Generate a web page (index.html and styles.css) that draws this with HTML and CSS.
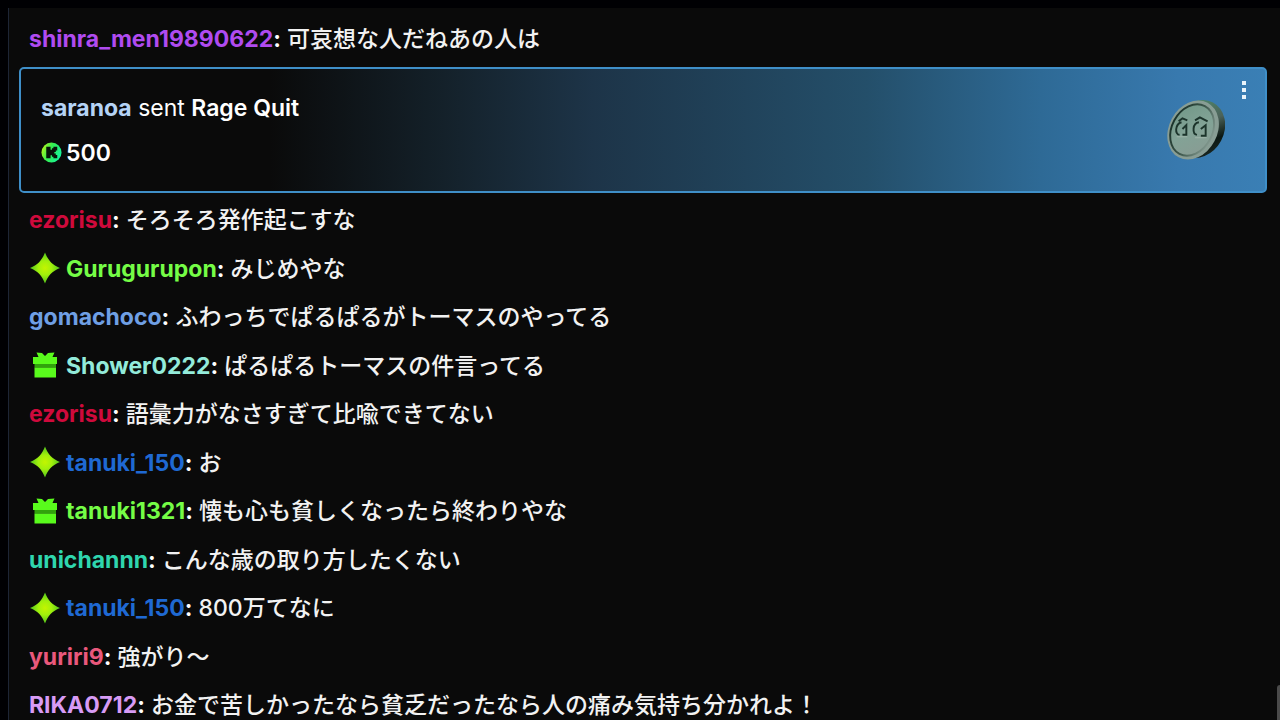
FILE: index.html
```
<!DOCTYPE html>
<html lang="ja">
<head>
    <meta charset="UTF-8">
    <meta name="viewport" content="width=device-width, initial-scale=1.0">
    <title>Chat</title>
    <link rel="stylesheet" href="styles.css">
</head>
<body>
    <!-- shared badge shapes -->
    <svg class="defs" width="0" height="0" aria-hidden="true">
        <defs>
            <radialGradient id="sparkFill">
                <stop offset="0" stop-color="#c3f500"/>
                <stop offset="0.45" stop-color="#a2f00c"/>
                <stop offset="1" stop-color="#4fc41c"/>
            </radialGradient>
            <symbol id="spark" viewBox="0 0 30 32">
                <path fill="url(#sparkFill)" d="M15 0.5C18 8 22 13 30 16C22 19 18 24 15 31.500C12 24 8 19 0 16C8 13 12 8 15 0.500Z"/>
            </symbol>
            <symbol id="gift" viewBox="0 0 30 32">
                <path fill="#59fb1c" d="M6.500 3.500L12 4L15 7L18 4L24.500 3.500L22.500 8H27V15H3V8H8.500Z"/>
                <path fill="#31a30c" d="M4.500 15H26V18.500H4.500Z"/>
                <path fill="#59fb1c" d="M4.500 18.500H26V28.500H4.500Z"/>
            </symbol>
        </defs>
    </svg>

    <main class="chat">
        <p class="message"><a href="#" class="name violet">shinra_men19890622</a><span class="colon">:</span> 可哀想な人だねあの人は</p>

        <section class="gift-card">
            <div class="gift-info">
                <p class="gift-title"><a href="#" class="name ice">saranoa</a> sent <strong>Rage Quit</strong></p>
                <p class="gift-amount">
                    <svg class="kick-icon" viewBox="0 0 22 22" aria-hidden="true">
                        <defs>
                            <linearGradient id="kickFill" x1="0" x2="1" y1="0.3" y2="0.7">
                                <stop offset="0" stop-color="#b4f51c"/>
                                <stop offset="0.4" stop-color="#35ee50"/>
                                <stop offset="1" stop-color="#12f5a4"/>
                            </linearGradient>
                        </defs>
                        <circle cx="11" cy="11" r="10.500" fill="url(#kickFill)"/>
                        <path fill="#07130b" d="M5.500 5H10V8H11.500V6.500H13V5H17V9H15.500V10.500H14V12H15.500V13.500H17V17H13V15.500H11.500V14H10V17H5.500Z"/>
                    </svg>
                    <span>500</span>
                </p>
            </div>
            <svg class="coin" viewBox="0 0 60 64" role="img" aria-label="Rage Quit">
                <defs>
                    <linearGradient id="coinFace" x1="0" y1="0" x2="1" y2="1">
                        <stop offset="0" stop-color="#6f9685"/>
                        <stop offset="0.5" stop-color="#82a396"/>
                        <stop offset="1" stop-color="#8a9a93"/>
                    </linearGradient>
                    <linearGradient id="coinEdge" x1="0" y1="0" x2="1" y2="1">
                        <stop offset="0" stop-color="#4f9673"/>
                        <stop offset="0.45" stop-color="#4b6259"/>
                        <stop offset="0.7" stop-color="#0b1712"/>
                        <stop offset="1" stop-color="#26332e"/>
                    </linearGradient>
                    <linearGradient id="coinRing" x1="0" y1="0" x2="1" y2="0">
                        <stop offset="0" stop-color="#1c342b"/>
                        <stop offset="0.5" stop-color="#3c564b"/>
                        <stop offset="1" stop-color="#7d948a"/>
                    </linearGradient>
                </defs>
                <ellipse cx="33" cy="31" rx="26" ry="31" transform="rotate(28 33 31)" fill="url(#coinEdge)"/>
                <ellipse cx="27" cy="32" rx="25" ry="32" transform="rotate(28 27 32)" fill="#889d94"/>
                <ellipse cx="26" cy="32" rx="21" ry="28" transform="rotate(28 26 32)" fill="url(#coinFace)" stroke="url(#coinRing)" stroke-width="2"/>
                <g fill="none" stroke="#1c342b" stroke-width="2">
                    <path d="M12 23L16 20L21 22M15 24C8 26 8 37 13 37M16 31L20 27V37H16"/>
                    <path d="M29 22L34 19L42 23M33 24C26 25 26 36 31 37M35 31L40 27V38H35"/>
                </g>
                <path d="M10 39H21M29 40H41" fill="none" stroke="#a0b5aa" stroke-width="1"/>
            </svg>
            <button type="button" class="menu-button" aria-label="Menu">
                <svg viewBox="0 0 4 20" aria-hidden="true">
                    <path fill="#e9f4fb" d="M0 0H4V4H0ZM0 7H4V11H0ZM0 14H4V18H0Z"/>
                </svg>
            </button>
        </section>

        <div class="messages">
            <p class="message"><a href="#" class="name red">ezorisu</a><span class="colon">:</span> そろそろ発作起こすな</p>
            <p class="message"><svg class="badge" aria-hidden="true"><use href="#spark"/></svg><a href="#" class="name green">Gurugurupon</a><span class="colon">:</span> みじめやな</p>
            <p class="message"><a href="#" class="name sky">gomachoco</a><span class="colon">:</span> ふわっちでぱるぱるがトーマスのやってる</p>
            <p class="message"><svg class="badge" aria-hidden="true"><use href="#gift"/></svg><a href="#" class="name mint">Shower0222</a><span class="colon">:</span> ぱるぱるトーマスの件言ってる</p>
            <p class="message"><a href="#" class="name red">ezorisu</a><span class="colon">:</span> 語彙力がなさすぎて比喩できてない</p>
            <p class="message"><svg class="badge" aria-hidden="true"><use href="#spark"/></svg><a href="#" class="name blue">tanuki_150</a><span class="colon">:</span> お</p>
            <p class="message"><svg class="badge" aria-hidden="true"><use href="#gift"/></svg><a href="#" class="name green">tanuki1321</a><span class="colon">:</span> 懐も心も貧しくなったら終わりやな</p>
            <p class="message"><a href="#" class="name teal">unichannn</a><span class="colon">:</span> こんな歳の取り方したくない</p>
            <p class="message"><svg class="badge" aria-hidden="true"><use href="#spark"/></svg><a href="#" class="name blue">tanuki_150</a><span class="colon">:</span> 800万てなに</p>
            <p class="message"><a href="#" class="name pink">yuriri9</a><span class="colon">:</span> 強がり～</p>
            <p class="message"><a href="#" class="name lilac">RIKA0712</a><span class="colon">:</span> お金で苦しかったなら貧乏だったなら人の痛み気持ち分かれよ！</p>
        </div>
        <div class="scroll-thumb"></div>
    </main>
</body>
</html>
```
FILE: styles.css
```
* {
    box-sizing: border-box;
}
body {
    margin: 0;
    padding: 8px 0 0 8px;
    min-height: 100vh;
    display: flex;
    background-color: #000003;
    color: #f2f2f2;
    font-family: Inter, "Noto Sans CJK JP", sans-serif;
    font-size: 23px;
    font-weight: 500;
    font-variant-ligatures: no-contextual;
    line-height: 30px;
}
p {
    margin: 0;
}
.defs {
    position: absolute;
}
.chat {
    position: relative;
    flex: 1;
    display: flex;
    flex-direction: column;
    padding: 16px 13px 0 10px;
    background-color: #0a0a0a;
    border-left: 1px solid #1d2535;
}
.message {
    height: 30px;
    padding-left: 10px;
    white-space: nowrap;
}
.name {
    font-weight: 700;
    text-decoration: none;
}
.colon {
    font-weight: 700;
    color: #fff;
}
.badge {
    width: 30px;
    height: 32px;
    margin: -4px 6px 0 1px;
    vertical-align: middle;
}
.messages {
    flex: 1;
    display: flex;
    flex-direction: column;
    justify-content: space-between;
}

/* gift card */
.gift-card {
    position: relative;
    display: flex;
    align-items: center;
    justify-content: space-between;
    height: 126px;
    margin: 13px 0 12px;
    padding: 0 40px 0 20px;
    border: 2px solid #3f8fc8;
    border-radius: 5px;
    background: linear-gradient(90deg, #0a0a0a 20%, #14212a 34%, #1d3448 46%, #244f6a 68%, #2e6a96 82%, #3879ae 93%, #3a7fb5 100%);
    color: #fff;
}
.gift-info {
    display: flex;
    flex-direction: column;
    gap: 15px;
}
.gift-title {
    font-weight: 400;
}
.gift-title strong {
    font-weight: 600;
}
.gift-amount {
    display: flex;
    align-items: center;
    gap: 4px;
    font-weight: 600;
}
.kick-icon {
    width: 21px;
    height: 21px;
}
.coin {
    width: 58px;
    height: 62px;
}
.menu-button {
    position: absolute;
    top: 8px;
    right: 11px;
    display: flex;
    justify-content: center;
    width: 20px;
    padding: 4px 0;
    border: none;
    background: none;
    cursor: pointer;
}
.menu-button svg {
    width: 4px;
    height: 20px;
}
.scroll-thumb {
    position: absolute;
    right: 0;
    bottom: 0;
    width: 3px;
    height: 35px;
    background-color: #4a4a4a;
    border-top-left-radius: 3px;
}

/* user colours */
.violet { color: #b04bf0; }
.ice { color: #b5d3f5; }
.red { color: #cf0a3c; }
.green { color: #75fd46; }
.sky { color: #6f9fe4; }
.mint { color: #93ebda; }
.blue { color: #1f69d3; }
.teal { color: #2fd6ae; }
.pink { color: #e9587c; }
.lilac { color: #d79bf5; }
```
